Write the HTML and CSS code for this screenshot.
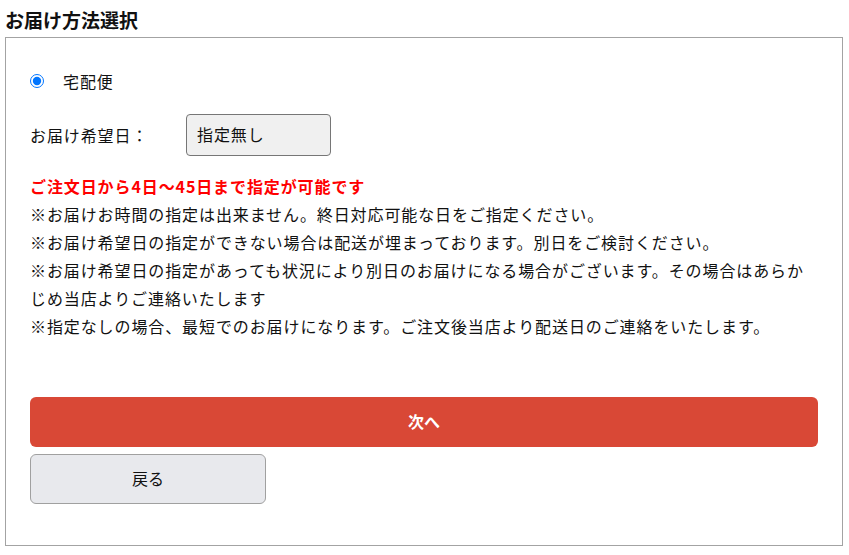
FILE: index.html
```html
<!DOCTYPE html>
<html lang="ja">
<head>
    <meta charset="UTF-8">
    <meta name="viewport" content="width=device-width, initial-scale=1.0">
    <title>お届け方法選択</title>
    <link rel="stylesheet" href="styles.css">
</head>
<body>
    <h2 class="section-title">お届け方法選択</h2>

    <div class="delivery-box">
        <label class="delivery-option">
            <input type="radio" name="delivery" checked>
            <span>宅配便</span>
        </label>

        <div class="date-row">
            <span class="date-label">お届け希望日：</span>
            <button type="button" class="date-select">指定無し</button>
        </div>

        <div class="notes">
            <p class="notes-alert">ご注文日から4日〜45日まで指定が可能です</p>
            <p>※お届けお時間の指定は出来ません。終日対応可能な日をご指定ください。</p>
            <p>※お届け希望日の指定ができない場合は配送が埋まっております。別日をご検討ください。</p>
            <p>※お届け希望日の指定があっても状況により別日のお届けになる場合がございます。その場合はあらかじめ当店よりご連絡いたします</p>
            <p>※指定なしの場合、最短でのお届けになります。ご注文後当店より配送日のご連絡をいたします。</p>
        </div>

        <button type="button" class="btn-next">次へ</button>
        <button type="button" class="btn-back">戻る</button>
    </div>
</body>
</html>
```

FILE: styles.css
```css
body {
    margin: 0;
    padding: 0 6px 0 5px;
    font-family: "Noto Sans CJK JP", "Noto Sans", sans-serif;
    color: #111;
    background: white;
}

.section-title {
    margin: 0;
    padding: 8px 0 6px;
    font-size: 19px;
    font-weight: bold;
    line-height: 23px;
}

.delivery-box {
    border: 1px solid #a3a3a3;
    padding: 32px 24px 40px 24px;
    box-sizing: border-box;
    height: 509px;
}

.delivery-option {
    display: flex;
    align-items: center;
    font-size: 16px;
    letter-spacing: 0.9px;
    height: 22px;
}

.delivery-option input {
    margin: 0;
    width: 14px;
    height: 14px;
    accent-color: #0075ff;
}

.delivery-option span {
    margin-left: 19px;
}

.date-row {
    display: flex;
    align-items: center;
    margin-top: 22px;
    font-size: 16px;
    letter-spacing: 0.9px;
}

.date-label {
    width: 156px;
}

.date-select {
    width: 145px;
    height: 42px;
    text-align: left;
    padding: 0 10px 2px;
    font-family: inherit;
    font-size: 16px;
    letter-spacing: 0.9px;
    color: #111;
    background: #f0f0f0;
    border: 1px solid #767676;
    border-radius: 4px;
}

.notes {
    margin-top: 16px;
    font-size: 16px;
    letter-spacing: 0.9px;
    line-height: 28px;
}

.notes p {
    margin: 0;
}

.notes-alert {
    color: #f00;
    font-weight: bold;
}

.btn-next {
    display: block;
    width: 100%;
    height: 50px;
    margin-top: 57px;
    padding-bottom: 3px;
    border: none;
    border-radius: 6px;
    background: #d94836;
    color: white;
    font-family: inherit;
    font-size: 16px;
    font-weight: bold;
}

.btn-back {
    display: block;
    width: 236px;
    height: 50px;
    margin-top: 7px;
    padding-bottom: 3px;
    border: 1px solid #a0a0a0;
    border-radius: 6px;
    background: #e8e9ed;
    color: #111;
    font-family: inherit;
    font-size: 16px;
}
```
